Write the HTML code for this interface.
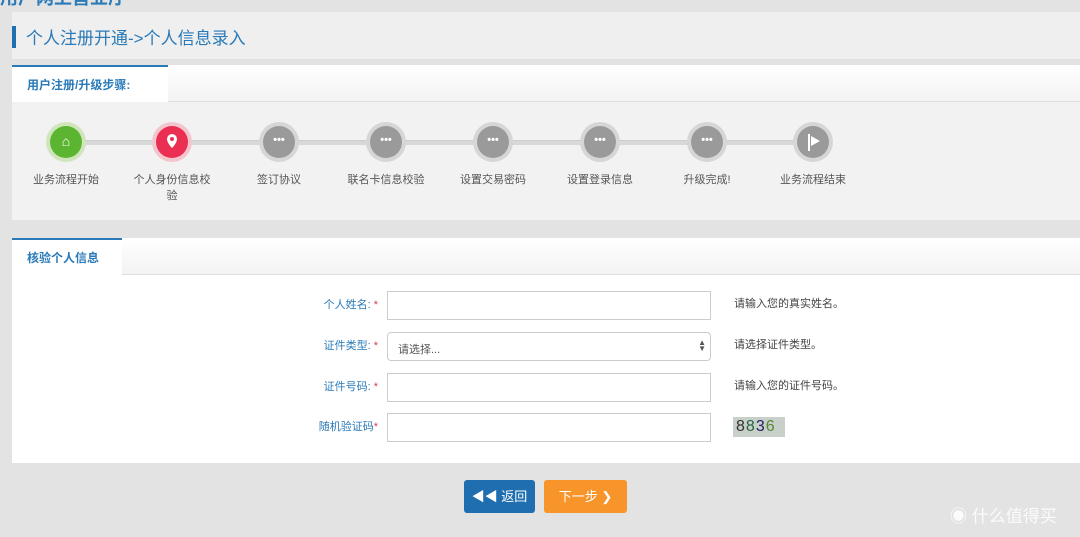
<!DOCTYPE html>
<html><head><meta charset="utf-8"><style>
*{margin:0;padding:0;box-sizing:border-box}
body{width:1080px;height:537px;background:#e3e3e3;font-family:"Liberation Sans","Noto Sans CJK SC",sans-serif;position:relative;overflow:hidden}
.abs{position:absolute}
.top{left:0;top:-16px;font-size:18px;color:#2a7ab8;font-weight:bold}
.hdr{left:12px;top:12px;width:1068px;height:48px;background:#efefef;border-bottom:1px solid #e0e0e0}
.hdr .bar{position:absolute;left:0;top:14px;width:4px;height:22px;background:#1f6fb0}
.hdr span{position:absolute;left:14px;top:12px;font-size:17px;color:#2a7ab8}
.tabrow{left:12px;width:1068px;height:37px;background:linear-gradient(#fff,#f3f3f3);border-bottom:1px solid #ddd}
.tab{position:absolute;left:0;top:0;height:37px;background:#fff;border-top:2px solid #2a7ab8;font-size:12px;font-weight:bold;color:#2a7ab8;padding:9px 0 0 15px}
.steps{left:12px;top:102px;width:1068px;height:118px;background:#f2f2f2}
.line{position:absolute;left:54px;top:38px;width:747px;height:5px;background:#d8d8d8;border-top:1px solid #ccc}
.st{position:absolute;top:20px;width:40px;height:40px;border-radius:50%;background:#d6d6d6;margin-left:-20px}
.st i{position:absolute;left:4px;top:4px;width:32px;height:32px;border-radius:50%;background:#9a9a9a;color:#fff;font-style:normal;font-size:11px;text-align:center;line-height:28px;font-weight:bold}
.lb{position:absolute;top:70px;width:100px;margin-left:-50px;text-align:center;font-size:11px;color:#555;line-height:16px}
.body{left:12px;top:275px;width:1068px;height:188px;background:#fff}
.lab{position:absolute;font-size:11px;color:#2a7ab8;text-align:right;width:80px}
.lab b{color:#d0405a;font-weight:normal;font-size:11px}
.inp{position:absolute;left:387px;width:324px;height:29px;border:1px solid #ccc;background:#fff}
.hint{position:absolute;left:734px;font-size:11px;color:#444}
.btn{position:absolute;top:480px;height:33px;border-radius:3px;color:#fff;font-size:13px;text-align:center;line-height:33px}
</style></head><body>
<div class="abs top">用户网上营业厅</div>
<div class="abs hdr"><div class="bar"></div><span>个人注册开通->个人信息录入</span></div>
<div class="abs tabrow" style="top:65px"><div class="tab" style="width:156px">用户注册/升级步骤:</div></div>
<div class="abs steps">
<div class="line"></div>
<div class="st" style="left:54px;background:#cfe6bd"><i style="background:#5cb531;font-size:14px;line-height:30px">⌂</i></div>
<div class="st" style="left:160px;background:#f3c6cd"><i style="background:#ea2f52"><svg width="32" height="32"><path d="M16 8a5 5 0 0 1 5 5c0 4-5 9-5 9s-5-5-5-9a5 5 0 0 1 5-5z" fill="#fff"/><circle cx="16" cy="13" r="2" fill="#ea2f52"/></svg></i></div>
<div class="st" style="left:267px"><i>•••</i></div>
<div class="st" style="left:374px"><i>•••</i></div>
<div class="st" style="left:481px"><i>•••</i></div>
<div class="st" style="left:588px"><i>•••</i></div>
<div class="st" style="left:695px"><i>•••</i></div>
<div class="st" style="left:801px"><i><svg width="32" height="32"><rect x="11" y="8" width="2" height="17" fill="#fff"/><path d="M14 10l9 5-9 5z" fill="#fff"/></svg></i></div>
<div class="lb" style="left:54px">业务流程开始</div>
<div class="lb" style="left:160px">个人身份信息校<br>验</div>
<div class="lb" style="left:267px">签订协议</div>
<div class="lb" style="left:374px">联名卡信息校验</div>
<div class="lb" style="left:481px">设置交易密码</div>
<div class="lb" style="left:588px">设置登录信息</div>
<div class="lb" style="left:695px">升级完成!</div>
<div class="lb" style="left:801px">业务流程结束</div>
</div>
<div class="abs tabrow" style="top:238px"><div class="tab" style="width:110px">核验个人信息</div></div>
<div class="abs body"></div>
<div class="lab" style="left:298px;top:296px">个人姓名: <b>*</b></div>
<div class="lab" style="left:298px;top:337px">证件类型: <b>*</b></div>
<div class="lab" style="left:298px;top:378px">证件号码: <b>*</b></div>
<div class="lab" style="left:298px;top:418px">随机验证码<b>*</b></div>
<div class="inp" style="top:291px"></div>
<div class="inp" style="top:332px;border-radius:4px;font-size:11px;color:#555;padding:8px 10px">请选择...<span style="position:absolute;right:4px;top:7px;font-size:8px;line-height:6px">▲<br>▼</span></div>
<div class="inp" style="top:373px"></div>
<div class="inp" style="top:413px"></div>
<div class="hint" style="top:295px">请输入您的真实姓名。</div>
<div class="hint" style="top:336px">请选择证件类型。</div>
<div class="hint" style="top:377px">请输入您的证件号码。</div>
<div class="abs" style="left:733px;top:417px;width:52px;height:20px;background:#c9cfc9;font-size:16px;letter-spacing:1px;padding-left:3px;color:#333;line-height:20px">8<span style="color:#264">8</span><span style="color:#226">3</span><span style="color:#583">6</span></div>
<div class="btn" style="left:464px;width:71px;background:#1f6fb0">◀◀ 返回</div>
<div class="btn" style="left:544px;width:83px;background:#f7942a">下一步 ❯</div>
<div class="abs" style="left:950px;top:502px;font-size:17px;color:rgba(255,255,255,.85)">◉ 什么值得买</div>
</body></html>
